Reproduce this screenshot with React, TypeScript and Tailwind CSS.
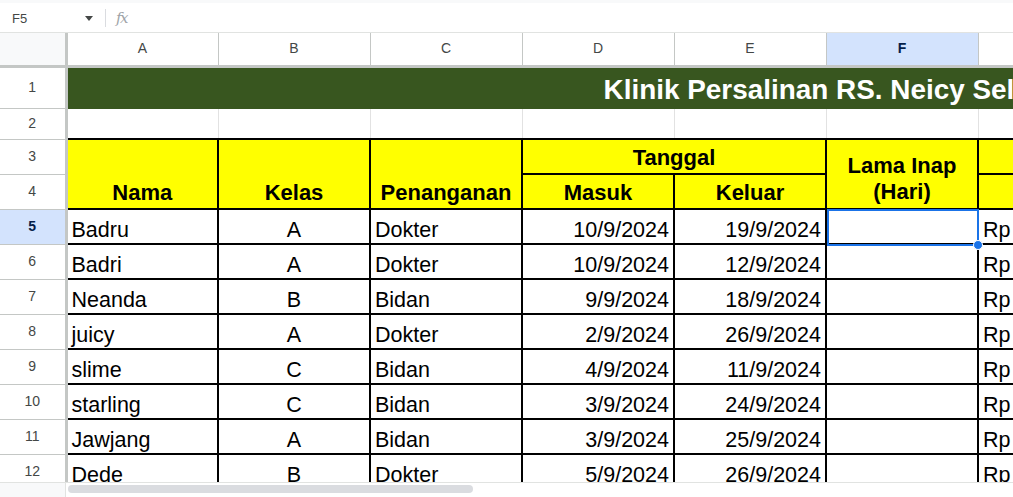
import React from "react";

type Row = {
  n: number;
  nama: string;
  kelas: string;
  pen: string;
  masuk: string;
  keluar: string;
};

const rows: Row[] = [
  { n: 5, nama: "Badru", kelas: "A", pen: "Dokter", masuk: "10/9/2024", keluar: "19/9/2024" },
  { n: 6, nama: "Badri", kelas: "A", pen: "Dokter", masuk: "10/9/2024", keluar: "12/9/2024" },
  { n: 7, nama: "Neanda", kelas: "B", pen: "Bidan", masuk: "9/9/2024", keluar: "18/9/2024" },
  { n: 8, nama: "juicy", kelas: "A", pen: "Dokter", masuk: "2/9/2024", keluar: "26/9/2024" },
  { n: 9, nama: "slime", kelas: "C", pen: "Bidan", masuk: "4/9/2024", keluar: "11/9/2024" },
  { n: 10, nama: "starling", kelas: "C", pen: "Bidan", masuk: "3/9/2024", keluar: "24/9/2024" },
  { n: 11, nama: "Jawjang", kelas: "A", pen: "Bidan", masuk: "3/9/2024", keluar: "25/9/2024" },
  { n: 12, nama: "Dede", kelas: "B", pen: "Dokter", masuk: "5/9/2024", keluar: "26/9/2024" },
];

const letters = ["A", "B", "C", "D", "E", "F", "G"];

function RowHead({ n, active }: { n: number; active?: boolean }) {
  return (
    <td
      className={`border-r-[3px] border-b border-r-[#c4c7c5] border-b-[#c4c7c5] text-center align-middle text-[14px] ${
        active ? "bg-[#d3e3fd] font-bold text-[#041e49]" : "bg-white text-[#444746]"
      }`}
    >
      {n}
    </td>
  );
}

export default function App() {
  const cell = "border-2 border-black align-bottom text-[21.5px] leading-[24px] pb-[1px] text-black whitespace-nowrap overflow-hidden";
  const head = "border-2 border-black bg-[#ffff00] align-bottom text-[22px] leading-[27px] pb-[2px] font-bold text-black text-center whitespace-nowrap";

  return (
    <div className="relative w-[1013px] h-[497px] overflow-hidden bg-white font-['Liberation_Sans',Arial,sans-serif] flex flex-col">
      {/* formula bar */}
      <div className="h-[33px] shrink-0 flex items-center border-b border-[#e1e3e1] border-t-[3px] border-t-[#f8f9fa] text-[13px] text-[#444746]">
        <div className="w-[105px] pl-3 flex items-center justify-between pr-[12px] pt-[2px]">
          <span>F5</span>
          <svg width="8" height="5" viewBox="0 0 8 5">
            <path d="M0 0h8L4 5z" fill="#444746" />
          </svg>
        </div>
        <div className="w-px h-[18px] bg-[#dadce0]" />
        <span className="ml-[10px] pt-[2px] italic font-['DejaVu_Serif',serif] text-[15px] text-[#a0a4a8] tracking-[-1.5px]">fx</span>
      </div>

      {/* grid */}
      <div className="flex-1 overflow-hidden">
        <table className="table-fixed border-collapse w-[1180px]">
          <colgroup>
            <col className="w-[66px]" />
            <col className="w-[152px]" />
            <col className="w-[152px]" />
            <col className="w-[152px]" />
            <col className="w-[152px]" />
            <col className="w-[152px]" />
            <col className="w-[152px]" />
            <col className="w-[202px]" />
          </colgroup>
          <tbody>
            <tr className="h-[33px]">
              <td className="bg-[#f8f9fa] border-r-[3px] border-b-[3px] border-[#c4c7c5]" />
              {letters.map((l) => (
                <td
                  key={l}
                  className={`border-b-[3px] border-r border-[#c4c7c5] text-center align-middle text-[14px] ${
                    l === "F" ? "bg-[#d3e3fd] font-bold text-[#041e49]" : "bg-white text-[#444746]"
                  }`}
                >
                  {l}
                </td>
              ))}
            </tr>

            <tr className="h-[42px]">
              <RowHead n={1} />
              <td colSpan={7} className="bg-[#38561f] border border-[#38561f] align-middle overflow-hidden">
                <div className="pl-[536px] pt-[4px] whitespace-nowrap text-[27.9px] leading-[30px] font-bold text-white">
                  Klinik Persalinan RS. Neicy Selatan
                </div>
              </td>
            </tr>

            <tr className="h-[31px]">
              <RowHead n={2} />
              {letters.map((l) => (
                <td key={l} className="border border-[#e2e2e2]" />
              ))}
            </tr>

            <tr className="h-[35px]">
              <RowHead n={3} />
              <td rowSpan={2} className={head}>Nama</td>
              <td rowSpan={2} className={head}>Kelas</td>
              <td rowSpan={2} className={head}>Penanganan</td>
              <td colSpan={2} className={head}>Tanggal</td>
              <td rowSpan={2} className={`${head} pb-[3px]`}>
                <div className="-mb-[1px]">Lama Inap</div>
                <div>(Hari)</div>
              </td>
              <td className={head} />
            </tr>
            <tr className="h-[35px]">
              <RowHead n={4} />
              <td className={head}>Masuk</td>
              <td className={head}>Keluar</td>
              <td className={head} />
            </tr>

            {rows.map((r) => (
              <tr key={r.n} className="h-[35px]">
                <RowHead n={r.n} active={r.n === 5} />
                <td className={`${cell} pl-[4px]`}>{r.nama}</td>
                <td className={`${cell} text-center`}>{r.kelas}</td>
                <td className={`${cell} pl-[4px]`}>{r.pen}</td>
                <td className={`${cell} text-right pr-[4px]`}>{r.masuk}</td>
                <td className={`${cell} text-right pr-[4px]`}>{r.keluar}</td>
                <td className="border-2 border-black" />
                <td className={`${cell} pl-[4px]`}>Rp</td>
              </tr>
            ))}
          </tbody>
        </table>
      </div>

      {/* active cell selection overlay (F5) */}
      <div className="absolute left-[827px] top-[209px] w-[152px] h-[37px] border-2 border-[#1a73e8] pointer-events-none">
        <div className="absolute -right-[6px] -bottom-[6px] w-[10px] h-[10px] rounded-full bg-[#1a73e8] border border-white" />
      </div>

      {/* horizontal scrollbar */}
      <div className="h-[15px] shrink-0 flex border-t border-[#e1e3e1] bg-white">
        <div className="w-[66px] bg-[#f8f9fa] border-r border-[#e1e3e1]" />
        <div className="flex-1 pt-[2px] pl-[2px]">
          <div className="w-[405px] h-[8px] rounded-full bg-[#dadce0]" />
        </div>
      </div>
    </div>
  );
}
